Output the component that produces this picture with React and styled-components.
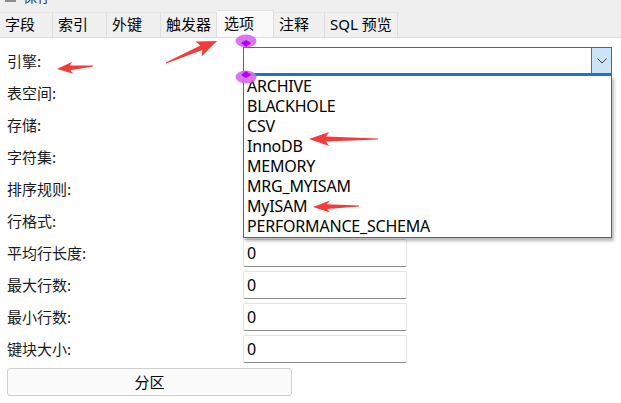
import React from 'react';
import styled, { createGlobalStyle } from 'styled-components';

const GlobalStyle = createGlobalStyle`
  html, body {
    margin: 0;
    padding: 0;
    background: #ffffff;
  }
  body {
    font-family: "Segoe UI", "Noto Sans", "Noto Sans CJK SC", sans-serif;
    color: #000;
  }
`;

const tabs = [
  { name: '字段', width: 53 },
  { name: '索引', width: 54 },
  { name: '外键', width: 54 },
  { name: '触发器', width: 56 },
  { name: '选项', width: 57, active: true },
  { name: '注释', width: 51 },
  { name: 'SQL 预览', width: 73 },
];

const engines = [
  'ARCHIVE',
  'BLACKHOLE',
  'CSV',
  'InnoDB',
  'MEMORY',
  'MRG_MYISAM',
  'MyISAM',
  'PERFORMANCE_SCHEMA',
];

const fields = [
  { label: '引擎:', type: 'combo', focus: true },
  { label: '表空间:', type: 'combo' },
  { label: '存储:', type: 'combo' },
  { label: '字符集:', type: 'combo' },
  { label: '排序规则:', type: 'combo' },
  { label: '行格式:', type: 'combo' },
  { label: '平均行长度:', type: 'input', value: '0' },
  { label: '最大行数:', type: 'input', value: '0' },
  { label: '最小行数:', type: 'input', value: '0' },
  { label: '键块大小:', type: 'input', value: '0' },
];

// red annotation arrows: tail -> tip
const arrows = [
  { from: [166, 63], to: [217, 41], head: 17, wing: 8 },
  { from: [93, 66], to: [57, 69], head: 13, wing: 6 },
  { from: [378, 139], to: [309, 139], head: 17, wing: 7 },
  { from: [359, 206], to: [313, 207], head: 14, wing: 6 },
];

const markers = [
  { x: 246, y: 41, tip: 'down' },
  { x: 246, y: 77, tip: 'up' },
];

function arrowPoints({ from, to, head, wing }) {
  const [x1, y1] = from;
  const [x2, y2] = to;
  const len = Math.hypot(x2 - x1, y2 - y1);
  const dx = (x2 - x1) / len;
  const dy = (y2 - y1) / len;
  const nx = -dy;
  const ny = dx;
  const bx = x2 - dx * head;
  const by = y2 - dy * head;
  const neck = 2.4;
  const tail = 0.4;
  const pts = [
    [x1 + nx * tail, y1 + ny * tail],
    [bx + nx * neck, by + ny * neck],
    [bx - dx * 3 + nx * wing, by - dy * 3 + ny * wing],
    [x2, y2],
    [bx - dx * 3 - nx * wing, by - dy * 3 - ny * wing],
    [bx - nx * neck, by - ny * neck],
    [x1 - nx * tail, y1 - ny * tail],
  ];
  return pts.map((p) => p.map((v) => v.toFixed(1)).join(',')).join(' ');
}

export default function App() {
  return (
    <>
      <GlobalStyle />
      <Page>
        <TopBar>
          <TitleRow>
            <TitleIcon />
            <TitleText>保存</TitleText>
          </TitleRow>
          <TabStrip>
            {tabs.map((t) => (
              <Tab key={t.name} $width={t.width} $active={t.active}>
                {t.name}
              </Tab>
            ))}
          </TabStrip>
        </TopBar>

        <Form>
          {fields.map((f) => (
            <React.Fragment key={f.label}>
              <Label>{f.label}</Label>
              {f.type === 'combo' ? (
                <Combo $focus={f.focus}>
                  <ComboButton $focus={f.focus}>
                    <svg width="10" height="6" viewBox="0 0 10 6">
                      <path d="M0.5 0.5 L5 5 L9.5 0.5" fill="none" stroke="#333" strokeWidth="1" />
                    </svg>
                  </ComboButton>
                </Combo>
              ) : (
                <Input>{f.value}</Input>
              )}
            </React.Fragment>
          ))}
          <PartitionButton>分区</PartitionButton>
        </Form>

        <DropList>
          {engines.map((e) => (
            <DropItem key={e}>{e}</DropItem>
          ))}
        </DropList>

        <Annotations width="621" height="403" viewBox="0 0 621 403">
          {arrows.map((a, i) => (
            <polygon key={i} points={arrowPoints(a)} fill="#f23b3b" />
          ))}
          {markers.map((m, i) => (
            <g key={i}>
              <ellipse cx={m.x} cy={m.y} rx="10.5" ry="6.5" fill="#d966f2" opacity="0.9" />
              {m.tip === 'down' ? (
                <polygon
                  points={`${m.x - 5},${m.y + 2} ${m.x},${m.y - 1} ${m.x + 5},${m.y + 2} ${m.x},${m.y + 6}`}
                  fill="#b100f5"
                />
              ) : (
                <polygon
                  points={`${m.x - 5},${m.y - 2} ${m.x},${m.y - 6} ${m.x + 5},${m.y - 2} ${m.x},${m.y + 1}`}
                  fill="#b100f5"
                />
              )}
            </g>
          ))}
        </Annotations>
      </Page>
    </>
  );
}

const Page = styled.div`
  position: relative;
  width: 621px;
  height: 403px;
  overflow: hidden;
  background: #fff;
`;

const TopBar = styled.div`
  background: #efefef;
  height: 37px;
  border-bottom: 1px solid #dcdcdc;
  display: flex;
  flex-direction: column;
  justify-content: space-between;
`;

const TitleRow = styled.div`
  height: 4px;
  overflow: hidden;
  display: flex;
  align-items: flex-end;
  gap: 7px;
  padding-left: 5px;
`;

const TitleIcon = styled.div`
  width: 11px;
  height: 12px;
  flex: none;
  background: #8c8c8c;
  margin-bottom: 2px;
`;

const TitleText = styled.div`
  font-size: 14px;
  line-height: 16px;
  color: #333;
  margin-bottom: -1px;
`;

const TabStrip = styled.div`
  display: flex;
  align-items: flex-end;
  height: 27px;
`;

const Tab = styled.div`
  box-sizing: border-box;
  width: ${(p) => p.$width}px;
  height: ${(p) => (p.$active ? 27 : 25)}px;
  padding-left: ${(p) => (p.$active ? 7 : 5)}px;
  background: ${(p) => (p.$active ? '#f9f9f9' : '#f0f0f0')};
  border-top: 1px solid ${(p) => (p.$active ? '#e2e2e2' : '#e6e6e6')};
  border-right: 1px solid #dedede;
  font-size: 15px;
  line-height: ${(p) => (p.$active ? 25 : 23)}px;
  color: #000;
  white-space: nowrap;
`;

const Form = styled.div`
  display: grid;
  grid-template-columns: 236px auto 1fr;
  grid-auto-rows: 28px;
  row-gap: 4px;
  padding: 9px 0 0 7px;
`;

const Label = styled.div`
  grid-column: 1;
  font-size: 15px;
  line-height: 28px;
  color: #1a1a1a;
  font-family: "Noto Sans CJK SC", sans-serif;
`;

const Combo = styled.div`
  grid-column: 2 / span 2;
  width: 369px;
  box-sizing: border-box;
  height: 28px;
  border: 1px solid ${(p) => (p.$focus ? '#1a73c8' : '#d0d0d0')};
  border-bottom: 2px solid ${(p) => (p.$focus ? '#1a73c8' : '#8a8a8a')};
  background: #fff;
  display: flex;
  justify-content: flex-end;
`;

const ComboButton = styled.div`
  width: 20px;
  height: 100%;
  box-sizing: border-box;
  border-left: 1px solid ${(p) => (p.$focus ? '#2f7ac6' : 'transparent')};
  background: ${(p) => (p.$focus ? '#cce4f7' : 'transparent')};
  display: flex;
  align-items: center;
  justify-content: center;
`;

const Input = styled.div`
  grid-column: 2;
  box-sizing: border-box;
  width: 164px;
  height: 28px;
  border: 1px solid #e3e3e3;
  border-bottom: 1px solid #8a8a8a;
  border-radius: 2px;
  padding-left: 3px;
  font-size: 16px;
  line-height: 26px;
  color: #000;
`;

const PartitionButton = styled.div`
  grid-column: 1 / span 2;
  width: 285px;
  box-sizing: border-box;
  height: 28px;
  margin-top: 1px;
  border: 1px solid #cfcfcf;
  border-radius: 3px;
  background: #fbfbfb;
  text-align: center;
  font-size: 15px;
  line-height: 26px;
  color: #000;
`;

const DropList = styled.div`
  position: absolute;
  left: 243px;
  top: 75px;
  width: 369px;
  box-sizing: border-box;
  border: 1px solid #1a73c8;
  background: #fff;
  box-shadow: 2px 3px 3px rgba(0, 0, 0, 0.28);
  padding: 0 0 1px 0;
`;

const DropItem = styled.div`
  height: 20px;
  line-height: 20px;
  padding-left: 3px;
  font-size: 16px;
  letter-spacing: -0.2px;
  color: #000;
  white-space: nowrap;
`;

const Annotations = styled.svg`
  position: absolute;
  left: 0;
  top: 0;
  pointer-events: none;
`;
